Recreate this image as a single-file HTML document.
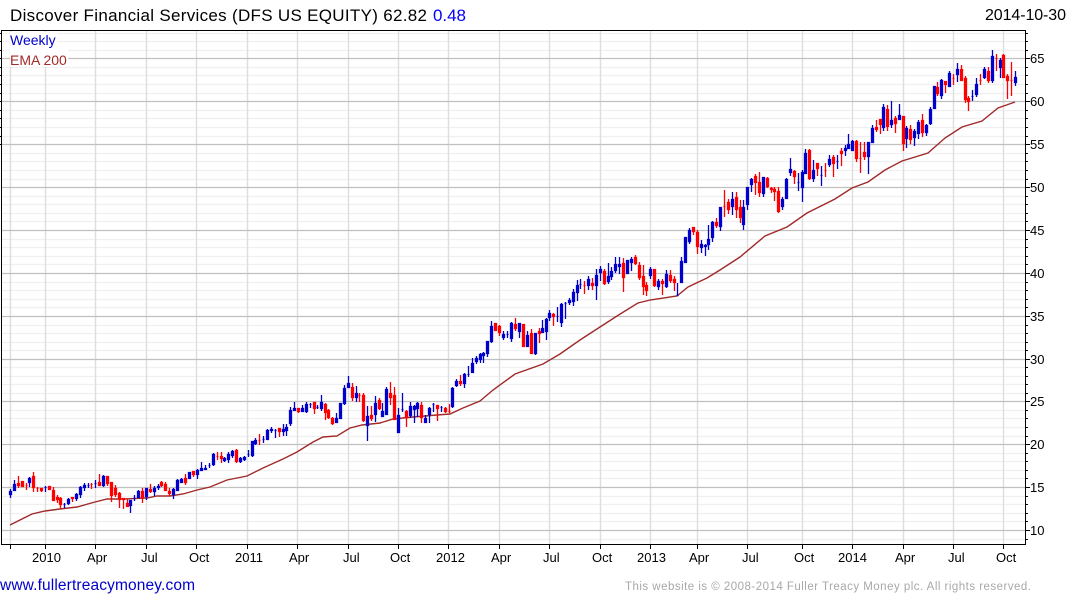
<!DOCTYPE html>
<html><head><meta charset="utf-8"><title>DFS</title>
<style>html,body{margin:0;padding:0;background:#fff;width:1075px;height:600px;overflow:hidden}svg{display:block}text{font-family:"Liberation Sans",sans-serif}</style></head>
<body>
<svg width="1075" height="600" viewBox="0 0 1075 600" xmlns="http://www.w3.org/2000/svg">
<rect width="1075" height="600" fill="#fff"/>
<path fill="none" stroke="#f0f0f0" stroke-width="1.3" d="M2 33.5H1025M2 41.5H1025M2 50.5H1025M2 67.5H1025M2 75.5H1025M2 84.5H1025M2 93.5H1025M2 110.5H1025M2 118.5H1025M2 127.5H1025M2 136.5H1025M2 153.5H1025M2 161.5H1025M2 170.5H1025M2 179.5H1025M2 196.5H1025M2 204.5H1025M2 213.5H1025M2 221.5H1025M2 239.5H1025M2 247.5H1025M2 256.5H1025M2 264.5H1025M2 282.5H1025M2 290.5H1025M2 299.5H1025M2 307.5H1025M2 325.5H1025M2 333.5H1025M2 342.5H1025M2 350.5H1025M2 367.5H1025M2 376.5H1025M2 384.5H1025M2 393.5H1025M2 410.5H1025M2 418.5H1025M2 427.5H1025M2 436.5H1025M2 453.5H1025M2 461.5H1025M2 470.5H1025M2 478.5H1025M2 496.5H1025M2 504.5H1025M2 513.5H1025M2 521.5H1025M2 539.5H1025"/>
<path fill="none" stroke="#dedede" stroke-width="1.4" d="M10.5 31V544M45.5 31V544M95.5 31V544M146.5 31V544M196.5 31V544M247.5 31V544M297.5 31V544M348.5 31V544M398.5 31V544M448.5 31V544M499.5 31V544M549.5 31V544M600.5 31V544M650.5 31V544M697.5 31V544M747.5 31V544M802.5 31V544M852.5 31V544M903.5 31V544M953.5 31V544M1003.5 31V544"/>
<path fill="none" stroke="#c0c0c0" stroke-width="1.3" d="M2 58.5H1025M2 101.5H1025M2 144.5H1025M2 187.5H1025M2 230.5H1025M2 273.5H1025M2 316.5H1025M2 359.5H1025M2 401.5H1025M2 444.5H1025M2 487.5H1025M2 530.5H1025"/>
<rect x="10" y="48" width="58" height="19" fill="#fff"/>
<rect x="10" y="32" width="47" height="16" fill="#fff"/>
<path fill="none" stroke="#000" stroke-width="1" d="M1.5 30.5H1025.5V544.5H1.5ZM10.5 544V549M45.5 544V549M95.5 544V549M146.5 544V549M196.5 544V549M247.5 544V549M297.5 544V549M348.5 544V549M398.5 544V549M448.5 544V549M499.5 544V549M549.5 544V549M600.5 544V549M650.5 544V549M697.5 544V549M747.5 544V549M802.5 544V549M852.5 544V549M903.5 544V549M953.5 544V549M1003.5 544V549M1025 58.5H1030M1025 101.5H1030M1025 144.5H1030M1025 187.5H1030M1025 230.5H1030M1025 273.5H1030M1025 316.5H1030M1025 359.5H1030M1025 401.5H1030M1025 444.5H1030M1025 487.5H1030M1025 530.5H1030M1025 33.5H1028M1025 41.5H1028M1025 50.5H1028M1025 67.5H1028M1025 75.5H1028M1025 84.5H1028M1025 93.5H1028M1025 110.5H1028M1025 118.5H1028M1025 127.5H1028M1025 136.5H1028M1025 153.5H1028M1025 161.5H1028M1025 170.5H1028M1025 179.5H1028M1025 196.5H1028M1025 204.5H1028M1025 213.5H1028M1025 221.5H1028M1025 239.5H1028M1025 247.5H1028M1025 256.5H1028M1025 264.5H1028M1025 282.5H1028M1025 290.5H1028M1025 299.5H1028M1025 307.5H1028M1025 325.5H1028M1025 333.5H1028M1025 342.5H1028M1025 350.5H1028M1025 367.5H1028M1025 376.5H1028M1025 384.5H1028M1025 393.5H1028M1025 410.5H1028M1025 418.5H1028M1025 427.5H1028M1025 436.5H1028M1025 453.5H1028M1025 461.5H1028M1025 470.5H1028M1025 478.5H1028M1025 496.5H1028M1025 504.5H1028M1025 513.5H1028M1025 521.5H1028M1025 539.5H1028M0 33.5H1M0 41.5H1M0 50.5H1M0 58.5H1M0 67.5H1M0 75.5H1M0 84.5H1M0 93.5H1M0 101.5H1M0 110.5H1M0 118.5H1M0 127.5H1M0 136.5H1M0 144.5H1"/>
<polyline fill="none" stroke="#a02a2a" stroke-width="1.4" points="10,525 20,520 32,514 45,511 60,509 77,507 95,502 107,499 123,499 147,498 157,496 170,496 183,494 197,490 210,487 227,480 247,476 263,468 283,459 297,452 313,442 323,437 337,436 350,428 362,425 380,423 393,419 413,417 437,415 450,414 463,408 480,401 493,390 515,374 543,364 560,354 580,340 600,327 617,316 638,303 650,300 677,296 688,287 707,278 720,270 740,257 765,236 787,227 807,213 835,199 852,188 868,182 885,170 902,161 928,153 945,138 962,127 982,121 998,108 1015,102"/>
<path fill="#0000cc" stroke="#0000cc" stroke-width="1.3" d="M10.5 489V498M9.5 491.5h2v3h-2zM14.5 480V491M13.5 484.5h2v6h-2zM29.5 477V487M28.5 478.5h2v4h-2zM45.5 486V492M44.5 487.5h2M64.5 503V508M63.5 504.5h2M68.5 498V505M67.5 499.5h2v4h-2zM76.5 493V501M75.5 494.5h2v4h-2zM80.5 486V498M79.5 487.5h2v7h-2zM84.5 483V491M83.5 485.5h2v2h-2zM88.5 483V488M87.5 485.5h2M95.5 480V488M94.5 483.5h2M103.5 475V487M102.5 476.5h2v9h-2zM130.5 500V513M129.5 500.5h2v5h-2zM134.5 495V501M133.5 498.5h2M138.5 490V498M137.5 491.5h2v6h-2zM146.5 488V500M145.5 488.5h2v8h-2zM154.5 486V496M153.5 488.5h2v3h-2zM158.5 484V490M157.5 486.5h2v1h-2zM173.5 488V499M172.5 489.5h2v5h-2zM177.5 479V490M176.5 480.5h2v10h-2zM181.5 478V483M180.5 479.5h2v3h-2zM189.5 472V478M188.5 472.5h2v6h-2zM197.5 469V479M196.5 470.5h2v4h-2zM201.5 462V471M200.5 468.5h2v2h-2zM205.5 465V470M204.5 468.5h2v1h-2zM209.5 463V468M208.5 465.5h2M213.5 453V466M212.5 454.5h2v10h-2zM224.5 457V462M223.5 458.5h2v2h-2zM228.5 452V463M227.5 454.5h2v5h-2zM232.5 450V458M231.5 451.5h2v4h-2zM240.5 457V463M239.5 458.5h2v3h-2zM244.5 456V461M243.5 457.5h2v2h-2zM248.5 450V457M247.5 454.5h2M252.5 441V457M251.5 441.5h2v14h-2zM255.5 438V445M254.5 440.5h2v3h-2zM263.5 436V443M262.5 439.5h2M267.5 429V440M266.5 430.5h2v9h-2zM271.5 427V433M270.5 429.5h2v1h-2zM275.5 429V438M274.5 430.5h2M283.5 424V436M282.5 429.5h2v2h-2zM286.5 424V436M285.5 427.5h2v3h-2zM290.5 407V426M289.5 410.5h2v13h-2zM294.5 402V411M293.5 408.5h2v2h-2zM302.5 405V412M301.5 408.5h2v3h-2zM306.5 402V413M305.5 404.5h2v7h-2zM310.5 403V408M309.5 404.5h2M317.5 405V409M316.5 407.5h2M321.5 395V411M320.5 402.5h2v6h-2zM336.5 413V423M335.5 418.5h2v4h-2zM340.5 403V419M339.5 403.5h2v15h-2zM344.5 385V405M343.5 388.5h2v15h-2zM348.5 376V388M347.5 383.5h2v4h-2zM356.5 386V402M355.5 393.5h2v4h-2zM367.5 406V441M366.5 416.5h2v9h-2zM375.5 396V422M374.5 403.5h2v11h-2zM382.5 403V417M381.5 411.5h2v5h-2zM386.5 387V415M385.5 389.5h2v25h-2zM398.5 408V433M397.5 415.5h2v17h-2zM402.5 393V412M401.5 409.5h2M410.5 402V418M409.5 406.5h2v9h-2zM414.5 405V423M413.5 406.5h2v3h-2zM417.5 402V417M416.5 403.5h2v5h-2zM425.5 415V423M424.5 418.5h2v4h-2zM429.5 407V423M428.5 408.5h2v6h-2zM433.5 403V412M432.5 404.5h2M441.5 406V412M440.5 407.5h2M452.5 387V408M451.5 388.5h2v18h-2zM456.5 379V387M455.5 381.5h2v4h-2zM464.5 373V388M463.5 374.5h2v9h-2zM468.5 366V377M467.5 374.5h2M472.5 358V373M471.5 363.5h2v9h-2zM476.5 356V364M475.5 358.5h2v3h-2zM480.5 353V363M479.5 354.5h2v5h-2zM483.5 352V363M482.5 353.5h2v2h-2zM487.5 341V357M486.5 341.5h2v12h-2zM491.5 321V343M490.5 326.5h2v15h-2zM503.5 331V340M502.5 334.5h2v3h-2zM507.5 331V338M506.5 334.5h2M511.5 322V342M510.5 323.5h2v15h-2zM519.5 323V338M518.5 323.5h2v8h-2zM527.5 331V347M526.5 335.5h2v11h-2zM535.5 333V355M534.5 333.5h2v20h-2zM542.5 320V333M541.5 328.5h2v4h-2zM546.5 318V340M545.5 319.5h2v12h-2zM549.5 310V321M548.5 313.5h2v4h-2zM557.5 307V322M556.5 316.5h2M561.5 303V327M560.5 304.5h2v18h-2zM565.5 302V319M564.5 303.5h2M569.5 298V305M568.5 300.5h2v2h-2zM573.5 289V306M572.5 292.5h2v9h-2zM577.5 280V301M576.5 285.5h2v7h-2zM580.5 279V289M579.5 284.5h2M588.5 276V290M587.5 279.5h2v6h-2zM596.5 269V300M595.5 275.5h2v10h-2zM600.5 266V281M599.5 269.5h2v3h-2zM608.5 263V284M607.5 276.5h2v5h-2zM611.5 267V280M610.5 271.5h2v5h-2zM615.5 257V273M614.5 264.5h2v6h-2zM619.5 257V274M618.5 264.5h2v2h-2zM627.5 260V274M626.5 260.5h2v13h-2zM631.5 257V271M630.5 259.5h2v3h-2zM650.5 267V279M649.5 269.5h2v6h-2zM658.5 279V290M657.5 281.5h2v5h-2zM666.5 270V288M665.5 274.5h2v12h-2zM677.5 283V296M676.5 295.5h2M681.5 257V283M680.5 261.5h2v21h-2zM685.5 237V263M684.5 237.5h2v25h-2zM689.5 228V244M688.5 230.5h2v11h-2zM701.5 240V253M700.5 244.5h2v3h-2zM705.5 244V256M704.5 245.5h2v1h-2zM708.5 225V250M707.5 239.5h2v5h-2zM712.5 221V242M711.5 222.5h2v15h-2zM720.5 207V231M719.5 207.5h2v19h-2zM732.5 192V215M731.5 199.5h2v7h-2zM743.5 200V230M742.5 207.5h2v17h-2zM747.5 187V210M746.5 187.5h2v17h-2zM751.5 178V192M750.5 179.5h2v5h-2zM763.5 177V197M762.5 177.5h2v16h-2zM782.5 197V210M781.5 199.5h2v7h-2zM786.5 178V199M785.5 179.5h2v19h-2zM790.5 158V176M789.5 169.5h2v3h-2zM798.5 173V191M797.5 182.5h2M802.5 170V202M801.5 172.5h2v15h-2zM805.5 149V173M804.5 153.5h2v20h-2zM813.5 160V182M812.5 170.5h2v8h-2zM821.5 166V186M820.5 175.5h2M829.5 155V167M828.5 159.5h2v5h-2zM837.5 155V169M836.5 161.5h2M845.5 145V156M844.5 148.5h2v2h-2zM848.5 134V149M847.5 144.5h2v4h-2zM852.5 140V151M851.5 141.5h2v9h-2zM868.5 142V174M867.5 142.5h2v14h-2zM872.5 125V142M871.5 128.5h2v14h-2zM883.5 104V131M882.5 107.5h2v20h-2zM891.5 101V128M890.5 120.5h2v4h-2zM899.5 104V119M898.5 115.5h2v4h-2zM906.5 126V148M905.5 128.5h2v10h-2zM914.5 129V146M913.5 131.5h2v6h-2zM918.5 120V139M917.5 122.5h2v11h-2zM926.5 124V136M925.5 125.5h2v7h-2zM930.5 107V125M929.5 109.5h2v14h-2zM934.5 86V109M933.5 86.5h2v22h-2zM941.5 79V99M940.5 80.5h2v15h-2zM949.5 71V87M948.5 73.5h2v13h-2zM957.5 63V82M956.5 69.5h2v5h-2zM972.5 90V101M971.5 96.5h2M976.5 78V97M975.5 84.5h2v10h-2zM984.5 67V79M983.5 69.5h2v8h-2zM992.5 50V83M991.5 56.5h2v24h-2zM1000.5 58V78M999.5 60.5h2v7h-2zM1015.5 71V86M1014.5 77.5h2v5h-2z"/>
<path fill="#ff0000" stroke="#ff0000" stroke-width="1.3" d="M18.5 476V488M17.5 483.5h2v2h-2zM22.5 481V487M21.5 481.5h2v5h-2zM26.5 483V490M25.5 485.5h2M33.5 472V492M32.5 476.5h2v11h-2zM37.5 487V492M36.5 488.5h2M41.5 488V492M40.5 488.5h2v2h-2zM49.5 486V490M48.5 486.5h2v3h-2zM53.5 487V501M52.5 490.5h2v10h-2zM57.5 495V503M56.5 497.5h2v2h-2zM60.5 497V509M59.5 498.5h2v6h-2zM72.5 497V502M71.5 497.5h2v1h-2zM91.5 483V489M90.5 484.5h2M99.5 474V486M98.5 482.5h2v3h-2zM107.5 476V486M106.5 476.5h2v7h-2zM111.5 482V502M110.5 482.5h2v13h-2zM115.5 485V497M114.5 488.5h2v6h-2zM119.5 492V508M118.5 493.5h2v6h-2zM123.5 498V509M122.5 498.5h2v1h-2zM127.5 499V507M126.5 503.5h2v3h-2zM142.5 488V503M141.5 491.5h2v6h-2zM150.5 484V493M149.5 489.5h2v2h-2zM161.5 481V487M160.5 482.5h2v3h-2zM165.5 482V491M164.5 484.5h2v6h-2zM169.5 488V496M168.5 491.5h2v2h-2zM185.5 474V485M184.5 478.5h2v4h-2zM193.5 471V477M192.5 471.5h2v3h-2zM217.5 452V460M216.5 456.5h2M221.5 452V463M220.5 456.5h2v2h-2zM236.5 449V463M235.5 450.5h2v11h-2zM259.5 434V445M258.5 440.5h2M279.5 428V437M278.5 428.5h2v3h-2zM298.5 408V413M297.5 408.5h2v3h-2zM314.5 402V414M313.5 402.5h2v6h-2zM325.5 403V420M324.5 404.5h2v8h-2zM328.5 409V419M327.5 410.5h2v7h-2zM332.5 417V425M331.5 418.5h2v5h-2zM352.5 383V401M351.5 387.5h2v10h-2zM359.5 393V402M358.5 395.5h2M363.5 393V422M362.5 395.5h2v25h-2zM371.5 406V421M370.5 415.5h2v3h-2zM379.5 398V410M378.5 400.5h2v8h-2zM390.5 382V405M389.5 393.5h2v4h-2zM394.5 387V420M393.5 395.5h2v24h-2zM406.5 410V427M405.5 411.5h2v6h-2zM421.5 402V423M420.5 405.5h2v12h-2zM437.5 405V421M436.5 405.5h2v3h-2zM445.5 407V413M444.5 408.5h2v3h-2zM449.5 404V413M448.5 411.5h2M460.5 375V386M459.5 381.5h2v2h-2zM495.5 323V330M494.5 323.5h2v7h-2zM499.5 325V336M498.5 326.5h2v6h-2zM515.5 318V331M514.5 324.5h2v4h-2zM523.5 324V347M522.5 324.5h2v22h-2zM531.5 329V354M530.5 333.5h2v20h-2zM539.5 328V343M538.5 331.5h2v2h-2zM553.5 313V326M552.5 314.5h2v2h-2zM584.5 281V294M583.5 285.5h2M592.5 278V290M591.5 283.5h2v2h-2zM604.5 269V285M603.5 271.5h2v12h-2zM623.5 258V292M622.5 263.5h2v14h-2zM635.5 255V265M634.5 257.5h2v6h-2zM639.5 262V280M638.5 265.5h2v12h-2zM643.5 265V295M642.5 276.5h2v10h-2zM646.5 282V296M645.5 285.5h2v5h-2zM654.5 269V287M653.5 269.5h2v16h-2zM662.5 279V295M661.5 281.5h2v2h-2zM670.5 270V283M669.5 275.5h2v5h-2zM674.5 276V291M673.5 279.5h2v3h-2zM693.5 227V235M692.5 227.5h2v4h-2zM697.5 230V254M696.5 232.5h2v14h-2zM716.5 218V228M715.5 222.5h2v3h-2zM724.5 190V217M723.5 206.5h2M728.5 199V214M727.5 202.5h2v7h-2zM736.5 192V218M735.5 197.5h2v12h-2zM740.5 200V223M739.5 207.5h2v10h-2zM755.5 174V195M754.5 176.5h2v6h-2zM759.5 172V197M758.5 182.5h2v10h-2zM767.5 177V188M766.5 178.5h2v8h-2zM771.5 187V193M770.5 188.5h2v1h-2zM774.5 187V201M773.5 189.5h2v2h-2zM778.5 187V213M777.5 191.5h2v20h-2zM794.5 170V184M793.5 171.5h2v5h-2zM809.5 149V180M808.5 150.5h2v28h-2zM817.5 163V176M816.5 163.5h2v5h-2zM825.5 163V177M824.5 170.5h2M833.5 155V177M832.5 157.5h2v6h-2zM841.5 148V166M840.5 151.5h2v2h-2zM856.5 140V162M855.5 141.5h2v17h-2zM860.5 142V173M859.5 158.5h2M864.5 142V160M863.5 152.5h2v4h-2zM876.5 120V132M875.5 127.5h2v2h-2zM880.5 119V134M879.5 119.5h2v5h-2zM887.5 105V131M886.5 109.5h2v17h-2zM895.5 116V133M894.5 118.5h2v5h-2zM903.5 116V151M902.5 116.5h2v27h-2zM910.5 125V144M909.5 129.5h2v10h-2zM922.5 114V137M921.5 120.5h2v12h-2zM937.5 82V96M936.5 87.5h2v6h-2zM945.5 81V93M944.5 81.5h2v3h-2zM953.5 74V85M952.5 78.5h2M961.5 65V81M960.5 69.5h2v11h-2zM965.5 76V103M964.5 78.5h2v21h-2zM968.5 96V111M967.5 98.5h2v3h-2zM980.5 74V85M979.5 80.5h2M988.5 67V83M987.5 71.5h2v9h-2zM996.5 54V71M995.5 58.5h2M1003.5 54V77M1002.5 55.5h2v22h-2zM1007.5 74V99M1006.5 76.5h2v4h-2zM1011.5 62V96M1010.5 80.5h2"/>
<text x="10" y="21" font-size="17" fill="#000" textLength="417">Discover Financial Services (DFS US EQUITY) 62.82</text>
<text x="433" y="21" font-size="17" fill="#0000ff" textLength="33">0.48</text>
<text x="985" y="20" font-size="16" fill="#000" textLength="81">2014-10-30</text>
<text x="10" y="45" font-size="14" fill="#0000cc">Weekly</text>
<text x="10" y="65" font-size="14" fill="#a52a2a">EMA 200</text>
<g font-size="13" fill="#000">
<text x="1030" y="63">65</text><text x="1030" y="106">60</text><text x="1030" y="149">55</text><text x="1030" y="192">50</text><text x="1030" y="235">45</text><text x="1030" y="278">40</text><text x="1030" y="321">35</text><text x="1030" y="364">30</text><text x="1030" y="406">25</text><text x="1030" y="449">20</text><text x="1030" y="492">15</text><text x="1030" y="535">10</text>
<text x="32" y="562">2010</text><text x="87" y="562">Apr</text><text x="141" y="562">Jul</text><text x="189" y="562">Oct</text><text x="235" y="562">2011</text><text x="289" y="562">Apr</text><text x="343" y="562">Jul</text><text x="390" y="562">Oct</text><text x="436" y="562">2012</text><text x="491" y="562">Apr</text><text x="543" y="562">Jul</text><text x="592" y="562">Oct</text><text x="637" y="562">2013</text><text x="689" y="562">Apr</text><text x="742" y="562">Jul</text><text x="794" y="562">Oct</text><text x="838" y="562">2014</text><text x="895" y="562">Apr</text><text x="948" y="562">Jul</text><text x="996" y="562">Oct</text>
</g>
<text x="0" y="590" font-size="15.5" fill="#0000cc" textLength="195">www.fullertreacymoney.com</text>
<text x="625" y="590" font-size="11.5" fill="#a8a8a8" textLength="406">This website is © 2008-2014 Fuller Treacy Money plc. All rights reserved.</text>
</svg>
</body></html>
